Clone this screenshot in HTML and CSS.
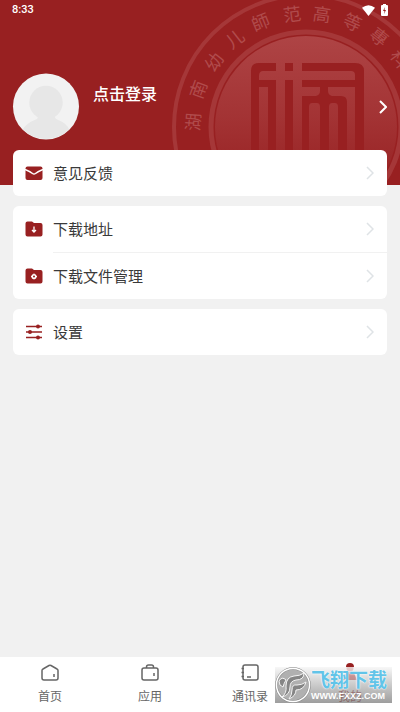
FILE: index.html
```html
<!DOCTYPE html>
<html lang="zh-CN">
<head>
<meta charset="utf-8">
<meta name="viewport" content="width=device-width, initial-scale=1">
<title>我的</title>
<link rel="stylesheet" href="styles.css">
</head>
<body>
<div class="app">
  <header class="hero">
    <svg class="seal" viewBox="0 0 270 192" aria-hidden="true">
      <defs>
        <linearGradient id="disc" x1="0" y1="0" x2="0" y2="1">
          <stop offset="0" stop-color="#ae4445"/>
          <stop offset=".45" stop-color="#a33334"/>
          <stop offset=".8" stop-color="#982223"/>
        </linearGradient>
      </defs>
      <g transform="translate(-171 7)">
        <circle cx="306" cy="127" r="132" fill="none" stroke="#a53738" stroke-width="4"/>
        <circle cx="306" cy="127" r="95" fill="none" stroke="#a53738" stroke-width="5"/>
        <circle cx="306" cy="127" r="91" fill="url(#disc)"/>
        <g class="seal-text">
          <text transform="translate(192 122) rotate(-86)">湖</text>
          <text transform="translate(197 89) rotate(-70)">南</text>
          <text transform="translate(213 61) rotate(-54)">幼</text>
          <text transform="translate(234 38) rotate(-38)">儿</text>
          <text transform="translate(260 21) rotate(-22)">師</text>
          <text transform="translate(292 13) rotate(-7)">范</text>
          <text transform="translate(322 13) rotate(8)">高</text>
          <text transform="translate(353 21) rotate(24)">等</text>
          <text transform="translate(380 36) rotate(39)">專</text>
          <text transform="translate(401 58) rotate(54)">科</text>
        </g>
        <g fill="#982021">
          <path d="M276 63V71H263Q259 71 259 76V80H276V192H268V87H259V192H251V71Q251 63 259 63Z"/>
          <path d="M285 63h8v8h-8zM285 80h8v112h-8z"/>
          <path fill-rule="evenodd" d="M302 63H355Q364 63 364 71V192H355V87H328V91Q328 95 332 96H341Q347 96 347 102V192H338V107Q338 103 335 103H332Q329 103 329 107V192H320V107Q320 103 317 103H312Q309 103 309 107V192H302V96H316Q320 95 320 91V87H302V80H355V75Q355 71 351 71H302Z"/>
        </g>
      </g>
    </svg>
    <div class="status">
      <span>8:33</span>
      <span class="status-icons">
        <svg width="13" height="11" viewBox="0 0 13 11"><path d="M0 2.800Q6.500-2.500 13 2.800L6.500 11Z" fill="#fff"/></svg>
        <svg width="7" height="12" viewBox="0 0 7 12"><path d="M2 0h3v1h1q1 0 1 1v9q0 1-1 1H1q-1 0-1-1V2q0-1 1-1h1z" fill="#fff"/><path d="M4 3L2 7h1.500L3 10l2-4H3.500z" fill="#982021"/></svg>
      </span>
    </div>
    <a class="profile" href="#">
      <svg class="avatar" viewBox="0 0 68 68" aria-hidden="true">
        <defs><clipPath id="face"><circle cx="34" cy="34" r="33"/></clipPath></defs>
        <circle cx="34" cy="34" r="33.500" fill="#f2f2f2"/>
        <g fill="#e7e7e7" clip-path="url(#face)"><circle cx="34" cy="30" r="17"/><path d="M26 41h17v3q0 3 4 4 8 3 11 10v10H10V58q4-7 12-10 4-1 4-4z"/></g>
      </svg>
      <span class="name">点击登录</span>
      <svg class="go" viewBox="0 0 8 14"><path d="M1 1l6 6-6 6"/></svg>
    </a>
  </header>

  <main class="menu">
    <section class="card">
      <a class="row" href="#">
        <svg class="icon" viewBox="0 0 18 18"><rect x=".5" y="2.500" width="17" height="13.500" rx="2" fill="#982021"/><path d="M0 5.500Q5 7.500 7.500 9.500Q9 10.500 10.500 9.500Q13 7.500 18 5.500" fill="none" stroke="#fff" stroke-width="1.500"/></svg>
        <span class="label">意见反馈<svg class="arrow" viewBox="0 0 8 14"><path d="M1 1l6 6-6 6"/></svg></span>
      </a>
    </section>
    <section class="card">
      <a class="row" href="#">
        <svg class="icon" viewBox="0 0 18 18"><path d="M2.500 1.500H7l2 1.500h6.500q2 0 2 2v9.500q0 2-2 2h-13q-2 0-2-2v-11q0-2 2-2z" fill="#982021"/><path d="M9 6.500V12M7 10l2 2 2-2" fill="none" stroke="#fff" stroke-width="1.300"/></svg>
        <span class="label">下载地址<svg class="arrow" viewBox="0 0 8 14"><path d="M1 1l6 6-6 6"/></svg></span>
      </a>
      <a class="row" href="#">
        <svg class="icon" viewBox="0 0 18 18"><path d="M2.500 1.500H7l2 1.500h6.500q2 0 2 2v9.500q0 2-2 2h-13q-2 0-2-2v-11q0-2 2-2z" fill="#982021"/><circle cx="9" cy="9.500" r="1.800" fill="none" stroke="#fff" stroke-width="1.600"/><path d="M9 6.500v1M9 11.500v1M6 9.500h1M11 9.500h1" stroke="#fff"/></svg>
        <span class="label">下载文件管理<svg class="arrow" viewBox="0 0 8 14"><path d="M1 1l6 6-6 6"/></svg></span>
      </a>
    </section>
    <section class="card">
      <a class="row" href="#">
        <svg class="icon" viewBox="0 0 18 18"><path d="M1 3.500h16M1 9h16M1 14.500h16" stroke="#982021" stroke-width="1.500"/><g fill="#982021"><circle cx="13" cy="3.500" r="2"/><circle cx="5" cy="9" r="2"/><circle cx="13" cy="14.500" r="2"/></g></svg>
        <span class="label">设置<svg class="arrow" viewBox="0 0 8 14"><path d="M1 1l6 6-6 6"/></svg></span>
      </a>
    </section>
  </main>

  <nav class="tabs">
    <a class="tab" href="#"><svg viewBox="0 0 20 20"><path d="M2 7.500Q2 6.500 3 6L9 2.500q1-.5 2 0L17 6q1 .5 1 1.500V15q0 2-2 2H4q-2 0-2-2zM14 11v3"/></svg>首页</a>
    <a class="tab" href="#"><svg viewBox="0 0 20 20"><rect x="2" y="5" width="16" height="12" rx="2"/><path d="M6.500 5V4q0-2 2-2h3q2 0 2 2v1M14 10v3"/></svg>应用</a>
    <a class="tab" href="#"><svg viewBox="0 0 20 20"><rect x="3" y="2" width="15" height="15" rx="2"/><path d="M1.500 5.500H4M1.500 9.500H4M1.500 13.500H4M7 14h4"/></svg>通讯录</a>
    <a class="tab active" href="#"><svg viewBox="0 0 20 20"><circle cx="10" cy="5" r="3.500" fill="#dba5a6"/><path d="M6 4q0-4 4-4t4 4z" fill="#982021"/><path d="M6 10q4-2 8 0l3 7H3z" fill="#c54a4b"/></svg>我的</a>
    <div class="watermark">
      <svg class="mark" viewBox="0 0 36 36" aria-hidden="true">
        <circle cx="18" cy="18" r="16.500" fill="#b0b0b0" stroke="#888" stroke-width="2.500"/>
        <circle cx="18" cy="18" r="16.500" fill="none" stroke="#fff" stroke-width="1.500"/>
        <g fill="#858585" stroke="#f4f4f4" stroke-width="1"><path d="M7 30Q12 26 11 19Q11 10 19 9Q25 9 29 6Q29 13 21 13Q15 14 15 20Q15 28 7 30Z"/><path d="M14 32Q17 28 17 23Q17 17 22 18Q27 18 31 15Q29 23 21 23Q21 29 14 32Z"/><path d="M4 14Q7 9 11 13Q9 16 8 20Q4 19 4 14Z"/></g>
      </svg>
      <span class="wm-text"><b>飞翔下载</b><small>WWW.FXXZ.COM</small></span>
    </div>
  </nav>
</div>
</body>
</html>
```
FILE: styles.css
```css
* { box-sizing: border-box; }
body {
  margin: 0;
  background: #f1f1f1;
  color: #3a3a3a;
  font-family: "Noto Sans CJK SC", sans-serif;
}
a { color: inherit; text-decoration: none; }
svg { display: block; flex: none; }

.app {
  min-height: 100vh;
  display: flex;
  flex-direction: column;
}

.hero {
  position: relative;
  overflow: hidden;
  padding-bottom: 45px;
  background: #982021;
  color: #fff;
}
.seal {
  position: absolute;
  top: -7px;
  right: -41px;
  width: 270px;
}
.seal-text {
  fill: #b04b4c;
  font-family: "Noto Sans CJK SC", serif;
  font-size: 18px;
  text-anchor: middle;
  dominant-baseline: central;
}
.status {
  position: relative;
  display: flex;
  align-items: center;
  justify-content: space-between;
  height: 20px;
  padding: 0 12px;
  font: 500 11px/20px Roboto, sans-serif;
}
.status-icons { display: flex; align-items: center; gap: 6px; }

.profile {
  position: relative;
  display: flex;
  margin-top: 53px;
  padding: 0 13px 0 12px;
}
.avatar { width: 68px; height: 67px; }
.name {
  flex: 1;
  margin: 8px 0 0 13px;
  font-size: 16px;
  font-weight: 500;
  line-height: 24px;
}
.go, .arrow {
  width: 8px;
  height: 14px;
  fill: none;
  stroke: #fff;
  stroke-width: 2;
}
.go { align-self: center; }
.arrow { stroke: #dfe3e6; stroke-width: 1.5; }

.menu {
  position: relative;
  flex: 1;
  display: flex;
  flex-direction: column;
  gap: 10px;
  margin-top: -35px;
  padding: 0 13px 20px;
}
.card { border-radius: 6px; background: #fff; }
.row { display: flex; align-items: center; padding-left: 12px; }
.icon { width: 18px; height: 18px; }
.label {
  flex: 1;
  display: flex;
  align-items: center;
  justify-content: space-between;
  height: 46px;
  margin-left: 10px;
  padding: 0 13px 1px 0;
  font-size: 15px;
}
.row + .row .label { height: 47px; border-top: 1px solid #f1f1f1; }

.tabs {
  position: relative;
  display: grid;
  grid-template-columns: repeat(4, 1fr);
  height: 55px;
  background: #fff;
}
.tab {
  display: flex;
  flex-direction: column;
  align-items: center;
  gap: 4px;
  padding-top: 6px;
  font-size: 12px;
  line-height: 18px;
  color: #666;
}
.tab svg {
  width: 20px;
  height: 20px;
  fill: none;
  stroke: #666;
  stroke-width: 1.5;
}
.tab.active { color: #982021; }
.tab.active svg { stroke: none; }

.watermark {
  position: absolute;
  right: 8px;
  bottom: 9px;
  display: flex;
  align-items: center;
  width: 117px;
  height: 36px;
  background: linear-gradient(rgba(240, 240, 240, .5), rgba(125, 125, 125, .75));
}
.watermark .mark { width: 36px; height: 36px; }
.wm-text { display: flex; flex-direction: column; }
.wm-text b {
  font-size: 19px;
  line-height: 22px;
  color: #62c4e8;
  text-shadow: 0 0 1px #fff, 0 0 2px #fff;
}
.wm-text small {
  font: 700 9px/12px "Liberation Sans", sans-serif;
  color: #fff;
}
```
